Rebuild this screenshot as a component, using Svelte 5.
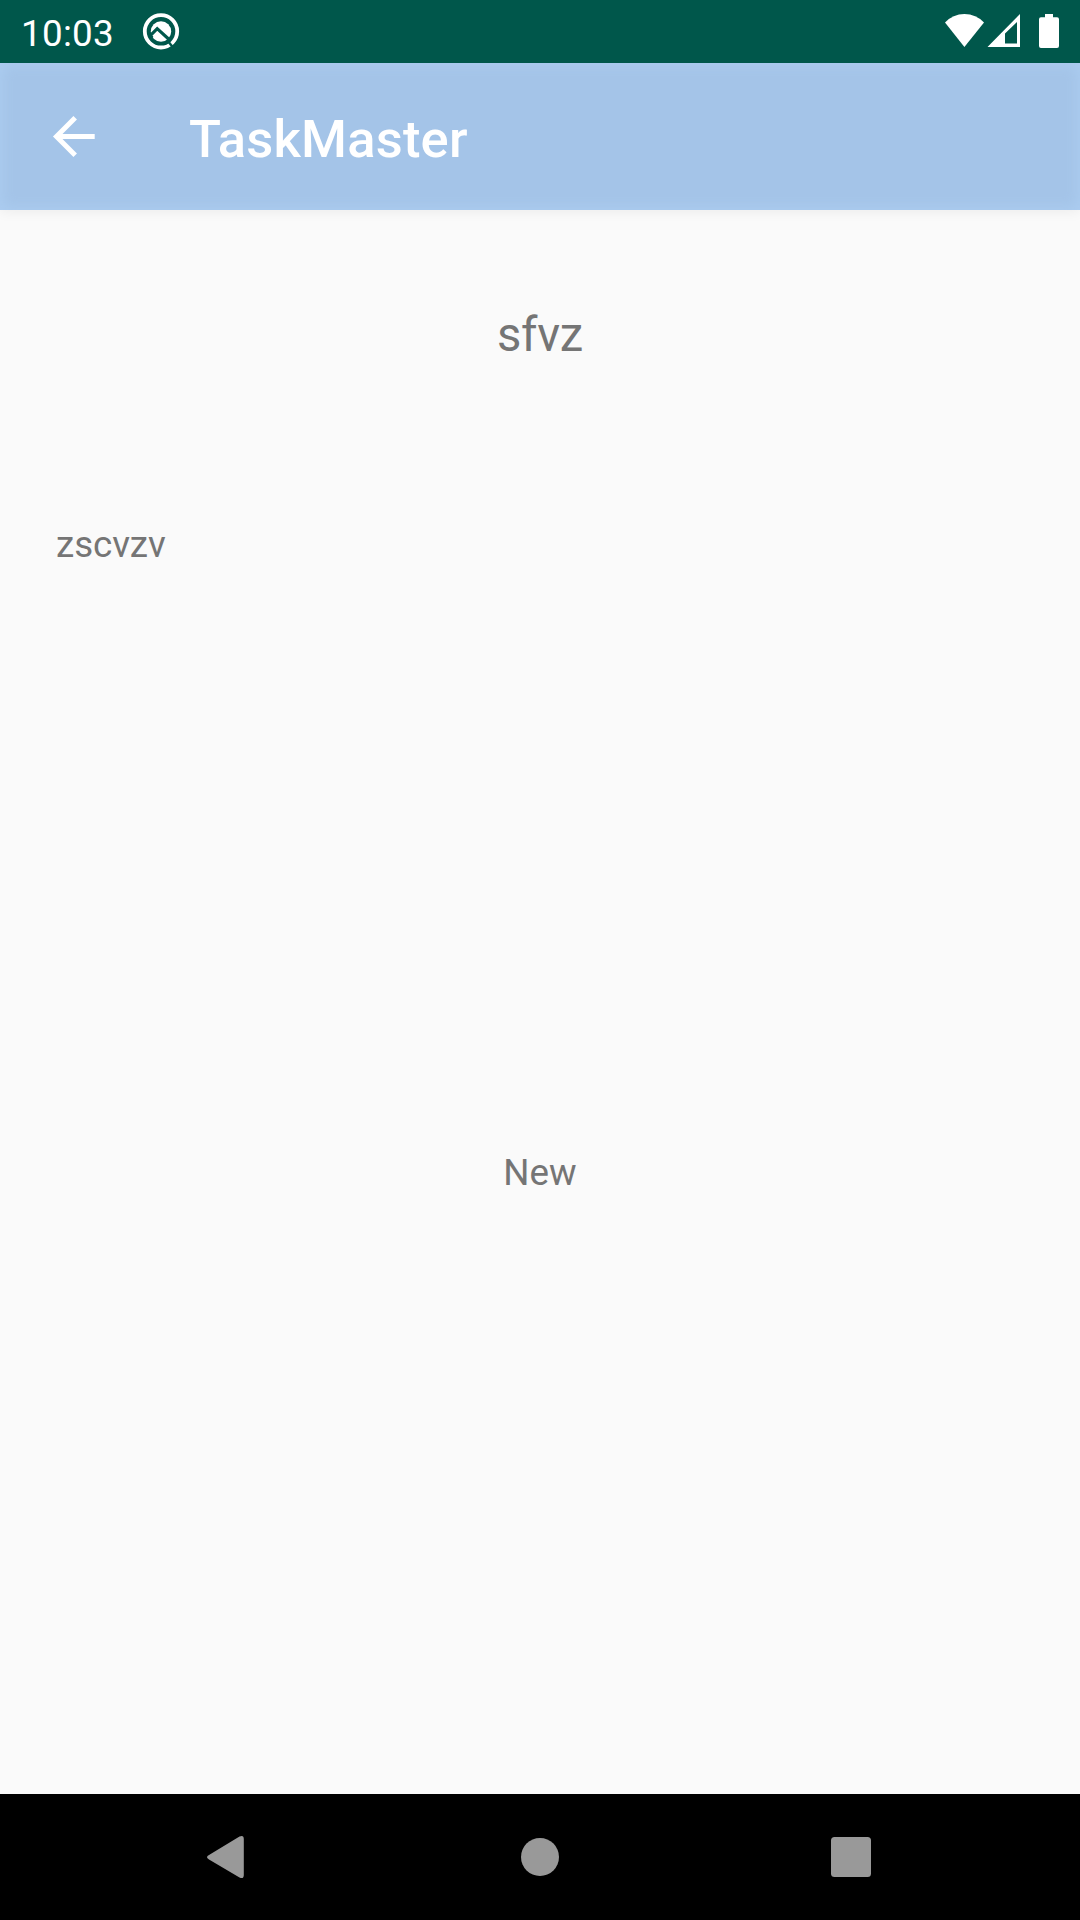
<script>
  const title = 'TaskMaster';
  const task = { name: 'sfvz', description: 'zscvzv', status: 'New' };
</script>

<div class="screen">
  <div class="status">
    <span class="clock">10:03</span>
    <svg class="app-icon" width="38" height="38" viewBox="0 0 38 38">
      <circle cx="19" cy="19.3" r="16.2" fill="none" stroke="#fff" stroke-width="3.8" />
      <circle cx="19" cy="19.5" r="10.2" fill="#fff" />
      <path d="M8.5 23.3 L15.2 16.6 L28.5 28.8" fill="none" stroke="#00574b" stroke-width="3.2" />
      <path d="M7 21 L11.4 24.4 L8 28Z" fill="#00574b" />
      <path d="M25.5 28.5 L31 35.5" stroke="#00574b" stroke-width="2.4" />
    </svg>
    <svg class="signals" width="116" height="36" viewBox="944 13 116 36">
      <path d="M945 22.5 Q953 14 964.4 14 Q976 14 984 22.5 L964.4 47Z" fill="#fff" />
      <path d="M987.5 47 L1020 14 V47Z M1005 33.5 V43.5 H1017 V22Z" fill="#fff" fill-rule="evenodd" />
      <path d="M1045 14 H1053 V17.3 H1057 Q1059 17.3 1059 19.3 V46 Q1059 48 1057 48 H1041 Q1039 48 1039 46 V19.3 Q1039 17.3 1041 17.3 H1045Z" fill="#fff" />
    </svg>
  </div>

  <header>
    <svg class="back" width="44" height="44" viewBox="0 0.5 44 44">
      <path d="M23.2 3.3 L4.5 22 L23.2 40.7 M4.5 22 H42.7" fill="none" stroke="#fff" stroke-width="5" />
    </svg>
    <h1>{title}</h1>
  </header>

  <main>
    <h2>{task.name}</h2>
    <p class="description">{task.description}</p>
    <p class="state">{task.status}</p>
  </main>

  <nav>
    <svg width="1080" height="126" viewBox="0 0 1080 126" fill="#999">
      <path d="M209 61 L239.5 42.5 Q243.8 40.5 243.8 45 V81 Q243.8 85.5 239.5 83.5 L209 65.5 Q205 63 209 61Z" />
      <circle cx="540" cy="63" r="19" />
      <rect x="831" y="43" width="40" height="40" rx="3.5" />
    </svg>
  </nav>
</div>

<style>
  :global(body) {
    margin: 0;
  }
  .screen {
    width: 1080px;
    height: 1920px;
    display: flex;
    flex-direction: column;
    background: #fafafa;
    color: #757575;
    font-family: Roboto, sans-serif;
    overflow: hidden;
  }
  svg {
    display: block;
    flex: none;
  }
  .status {
    position: relative;
    z-index: 1;
    box-sizing: border-box;
    height: 63px;
    flex: none;
    display: flex;
    align-items: flex-start;
    padding: 0 20px 0 21px;
    background: #00574b;
    color: #fff;
  }
  .clock {
    width: 121px;
    padding-top: 12px;
    font-size: 36.75px;
    line-height: 44px;
    letter-spacing: 0.3px;
  }
  .app-icon {
    margin-top: 12px;
  }
  .signals {
    margin: 13px 0 0 auto;
  }
  header {
    box-sizing: border-box;
    height: 147px;
    flex: none;
    display: flex;
    align-items: center;
    padding-left: 52px;
    background: #a4c4e8;
    box-shadow:
      inset 0 0 14px 2px #accdf1,
      0 2px 12px rgba(0, 0, 0, 0.06);
    color: #fff;
  }
  .back {
    margin-right: 93px;
  }
  h1,
  h2,
  p {
    margin: 0;
    font-weight: 400;
  }
  h1 {
    padding-top: 4px;
    font-size: 52.5px;
    line-height: 62px;
    font-weight: 500;
    letter-spacing: 0.2px;
  }
  main {
    flex: 1;
    display: flex;
    flex-direction: column;
    align-items: center;
  }
  h2 {
    margin-top: 97px;
    font-size: 47.25px;
    line-height: 56px;
    letter-spacing: -0.3px;
  }
  .description {
    align-self: flex-start;
    margin: 160px 0 0 56px;
    font-size: 36.75px;
    line-height: 44px;
    letter-spacing: -0.1px;
  }
  .state {
    margin-top: 584px;
    font-size: 36.75px;
    line-height: 44px;
  }
  nav {
    height: 126px;
    flex: none;
    background: #000;
  }
</style>
